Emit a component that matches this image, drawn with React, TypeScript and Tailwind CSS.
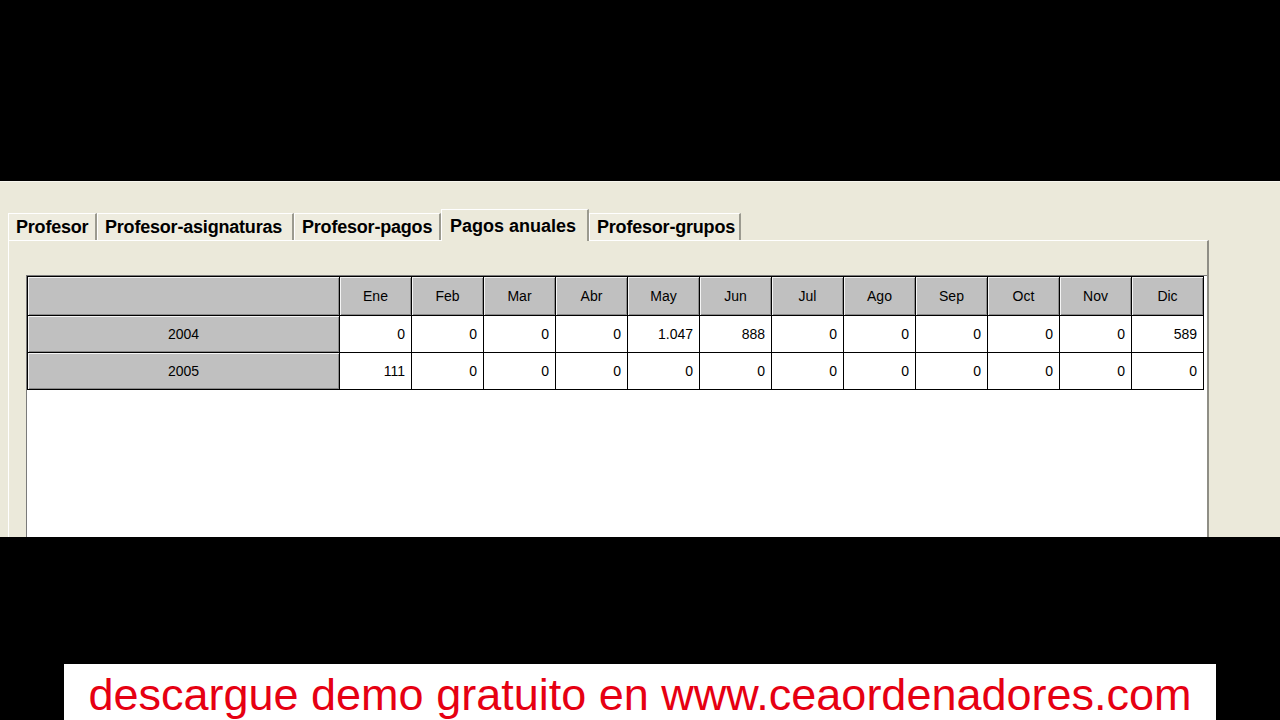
import React from "react"

const months = ["Ene", "Feb", "Mar", "Abr", "May", "Jun", "Jul", "Ago", "Sep", "Oct", "Nov", "Dic"]

const rows = [
  { year: "2004", values: ["0", "0", "0", "0", "1.047", "888", "0", "0", "0", "0", "0", "589"] },
  { year: "2005", values: ["111", "0", "0", "0", "0", "0", "0", "0", "0", "0", "0", "0"] },
]

const tabs = [
  { label: "Profesor", width: "w-[89px]" },
  { label: "Profesor-asignaturas", width: "w-[197px]" },
  { label: "Profesor-pagos", width: "w-[147px]" },
  { label: "Pagos anuales", width: "w-[148px]", active: true },
  { label: "Profesor-grupos", width: "w-[152px]" },
]

const bevel = "shadow-[inset_1px_1px_0_#f4f4f4,inset_-1px_-1px_0_#8a8a8a]"

function Tabs() {
  return (
    <div className="flex h-[31px] items-end pl-2">
      {tabs.map((tab) =>
        tab.active ? (
          <div
            key={tab.label}
            className={`${tab.width} relative z-10 -mb-px flex h-[32px] items-start whitespace-nowrap border-t border-l border-white border-r-2 border-r-[#9b9a8f] bg-[#ebe9da] pt-[3px] pl-2 text-[18px] font-bold text-black`}
          >
            {tab.label}
          </div>
        ) : (
          <div
            key={tab.label}
            className={`${tab.width} flex h-[27px] items-center whitespace-nowrap border-t border-l border-white border-r-2 border-r-[#9b9a8f] bg-[#eeecdf] pl-[7px] text-[18px] font-bold tracking-[-0.2px] text-black`}
          >
            {tab.label}
          </div>
        )
      )}
    </div>
  )
}

function Grid() {
  return (
    <div className="h-full flex-1 border-t border-l border-[#7a7a7a] bg-white">
      <table className="w-[1176px] table-fixed border-collapse text-[14px] text-black">
        <colgroup>
          <col className="w-[312px]" />
          {months.map((m) => (
            <col key={m} className="w-[72px]" />
          ))}
        </colgroup>
        <thead>
          <tr className="h-[39px]">
            <th className={`border border-black bg-[#c0c0c0] ${bevel}`}></th>
            {months.map((m) => (
              <th key={m} className={`border border-black bg-[#c0c0c0] font-normal ${bevel}`}>
                {m}
              </th>
            ))}
          </tr>
        </thead>
        <tbody>
          {rows.map((row) => (
            <tr key={row.year} className="h-[37px]">
              <td className={`border border-black bg-[#c0c0c0] text-center ${bevel}`}>{row.year}</td>
              {row.values.map((v, i) => (
                <td key={i} className="border border-black bg-white pr-[6px] text-right">
                  {v}
                </td>
              ))}
            </tr>
          ))}
        </tbody>
      </table>
    </div>
  )
}

export default function App() {
  return (
    <div className="flex h-[720px] w-[1280px] flex-col overflow-hidden bg-black" style={{ fontFamily: '"Liberation Sans", Arial, sans-serif' }}>
      <div className="h-[181px] shrink-0" />

      {/* ventana */}
      <div className="flex h-[356px] shrink-0 flex-col overflow-hidden border-t border-[#f7f6ee] bg-[#ebe9da] pt-[27px]">
        <Tabs />
        <div className="ml-2 flex w-[1201px] flex-1 border-t border-l border-white border-r-2 border-r-[#8f8e85] pt-[34px] pl-[17px]">
          <Grid />
        </div>
      </div>

      <div className="h-[127px] shrink-0" />

      {/* pie */}
      <div className="mx-[64px] flex h-[56px] shrink-0 items-center justify-center bg-white pt-[4px]">
        <span className="text-[45px] leading-none text-[#e60012]">descargue demo gratuito en www.ceaordenadores.com</span>
      </div>
    </div>
  )
}
